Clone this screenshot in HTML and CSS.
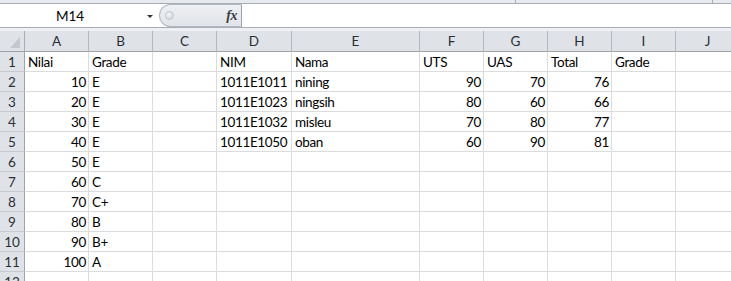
FILE: index.html
```html
<!DOCTYPE html>
<html>
<head>
<meta charset="utf-8">
<link rel="stylesheet" href="styles.css">
</head>
<body>
<div class="app">
  <div class="ribbon-edge">
    <div class="rseg rseg1"></div>
    <div class="rseg rseg2"></div>
    <div class="rseg rseg3"></div>
  </div>
  <div class="formula-bar">
    <div class="name-box">M14</div>
    <div class="nb-arrow"><span class="tri"></span></div>
    <div class="pill">
      <span class="knob"></span>
      <span class="fx">fx</span>
    </div>
    <div class="formula-input"></div>
  </div>
  <div class="gap-strip"></div>
  <div class="sheet">
    <div class="corner"><span class="corner-tri"></span></div>
    <div class="ch">A</div><div class="ch">B</div><div class="ch">C</div><div class="ch">D</div><div class="ch">E</div><div class="ch">F</div><div class="ch">G</div><div class="ch">H</div><div class="ch">I</div><div class="ch">J</div>

    <div class="rh">1</div>
    <div class="c">Nilai</div><div class="c">Grade</div><div class="c"></div><div class="c">NIM</div><div class="c">Nama</div><div class="c">UTS</div><div class="c">UAS</div><div class="c">Total</div><div class="c">Grade</div><div class="c"></div>

    <div class="rh">2</div>
    <div class="c n">10</div><div class="c">E</div><div class="c"></div><div class="c">1011E1011</div><div class="c">nining</div><div class="c n">90</div><div class="c n">70</div><div class="c n">76</div><div class="c"></div><div class="c"></div>

    <div class="rh">3</div>
    <div class="c n">20</div><div class="c">E</div><div class="c"></div><div class="c">1011E1023</div><div class="c">ningsih</div><div class="c n">80</div><div class="c n">60</div><div class="c n">66</div><div class="c"></div><div class="c"></div>

    <div class="rh">4</div>
    <div class="c n">30</div><div class="c">E</div><div class="c"></div><div class="c">1011E1032</div><div class="c">misleu</div><div class="c n">70</div><div class="c n">80</div><div class="c n">77</div><div class="c"></div><div class="c"></div>

    <div class="rh">5</div>
    <div class="c n">40</div><div class="c">E</div><div class="c"></div><div class="c">1011E1050</div><div class="c">oban</div><div class="c n">60</div><div class="c n">90</div><div class="c n">81</div><div class="c"></div><div class="c"></div>

    <div class="rh">6</div>
    <div class="c n">50</div><div class="c">E</div><div class="c"></div><div class="c"></div><div class="c"></div><div class="c"></div><div class="c"></div><div class="c"></div><div class="c"></div><div class="c"></div>

    <div class="rh">7</div>
    <div class="c n">60</div><div class="c">C</div><div class="c"></div><div class="c"></div><div class="c"></div><div class="c"></div><div class="c"></div><div class="c"></div><div class="c"></div><div class="c"></div>

    <div class="rh">8</div>
    <div class="c n">70</div><div class="c">C+</div><div class="c"></div><div class="c"></div><div class="c"></div><div class="c"></div><div class="c"></div><div class="c"></div><div class="c"></div><div class="c"></div>

    <div class="rh">9</div>
    <div class="c n">80</div><div class="c">B</div><div class="c"></div><div class="c"></div><div class="c"></div><div class="c"></div><div class="c"></div><div class="c"></div><div class="c"></div><div class="c"></div>

    <div class="rh">10</div>
    <div class="c n">90</div><div class="c">B+</div><div class="c"></div><div class="c"></div><div class="c"></div><div class="c"></div><div class="c"></div><div class="c"></div><div class="c"></div><div class="c"></div>

    <div class="rh">11</div>
    <div class="c n">100</div><div class="c">A</div><div class="c"></div><div class="c"></div><div class="c"></div><div class="c"></div><div class="c"></div><div class="c"></div><div class="c"></div><div class="c"></div>

    <div class="rh">12</div>
    <div class="c"></div><div class="c"></div><div class="c"></div><div class="c"></div><div class="c"></div><div class="c"></div><div class="c"></div><div class="c"></div><div class="c"></div><div class="c"></div>
  </div>
</div>
</body>
</html>
```

FILE: styles.css
```css
html, body {
  margin: 0;
  padding: 0;
  background: #ffffff;
}
body {
  width: 731px;
  height: 281px;
  overflow: hidden;
  font-family: Lato, "Liberation Sans", sans-serif;
  font-size: 13px;
  color: #000;
}
.app {
  width: 731px;
  height: 281px;
  overflow: hidden;
}
.ribbon-edge {
  display: flex;
  height: 3px;
  background: #e6e9ed;
  border-bottom: 1px solid #a7adb5;
}
.rseg {
  height: 3px;
  border-right: 1px solid #a7adb5;
  box-sizing: border-box;
}
.rseg1 { width: 516px; }
.rseg2 { width: 197px; }
.rseg3 { flex: 1; border-right: none; }

.formula-bar {
  display: flex;
  height: 23px;
  background: #fff;
  border-bottom: 1px solid #a7adb5;
}
.name-box {
  width: 140px;
  display: flex;
  align-items: center;
  justify-content: center;
  font-size: 13.5px;
  color: #000;
  padding-top: 1px;
  box-sizing: border-box;
}
.nb-arrow {
  width: 19px;
  display: flex;
  align-items: center;
  padding-left: 7px;
  box-sizing: border-box;
}
.tri {
  width: 0;
  height: 0;
  border-left: 3px solid transparent;
  border-right: 3px solid transparent;
  border-top: 3px solid #333;
  margin-top: 2px;
}
.pill {
  width: 83px;
  box-sizing: border-box;
  display: flex;
  align-items: center;
  justify-content: space-between;
  background: linear-gradient(#eef0f3, #e1e4e8);
  border: 1px solid #b3b9c1;
  border-right: 1px solid #9da4ad;
  border-radius: 12px 0 0 12px;
  padding: 0 4px 0 5px;
}
.knob {
  width: 9px;
  height: 9px;
  border-radius: 50%;
  background: radial-gradient(circle at 40% 35%, #f4f5f7, #c9cdd3);
  border: 1px solid #c3c7cd;
  box-sizing: border-box;
}
.fx {
  font-family: "Liberation Serif", serif;
  font-style: italic;
  font-weight: bold;
  font-size: 14px;
  color: #3a3f46;
  letter-spacing: -0.5px;
}
.formula-input {
  flex: 1;
  background: #fff;
}
.gap-strip {
  height: 3px;
  background: #eef0f3;
}

.sheet {
  display: grid;
  grid-template-columns: 25px 64px 64px 64px 75px 128px 64px 64px 64px 64px 64px;
  grid-template-rows: 21px;
  grid-auto-rows: 20px;
  width: 740px;
}
.sheet > div {
  box-sizing: border-box;
  white-space: nowrap;
  overflow: hidden;
}
.corner {
  position: relative;
  background: #dfe3e8;
  border-right: 1px solid #a9aeb5;
  border-bottom: 1px solid #9ea3aa;
}
.corner-tri {
  position: absolute;
  left: 10px;
  top: 6px;
  width: 10px;
  height: 11px;
  background: #c4c8ce;
  clip-path: polygon(100% 0, 100% 100%, 0 100%);
}
.ch {
  background: #dfe3e8;
  border-right: 1px solid #b3b8be;
  border-bottom: 1px solid #9ea3aa;
  text-align: center;
  line-height: 20px;
  color: #2b2f36;
  font-size: 13.5px;
}
.rh {
  background: #dfe3e8;
  border-right: 1px solid #9ea3aa;
  border-bottom: 1px solid #c6cace;
  text-align: center;
  color: #2b2f36;
  line-height: 18px;
  padding-top: 1px;
  font-size: 13.5px;
}
.c {
  border-right: 1px solid #dadcdd;
  border-bottom: 1px solid #dadcdd;
  padding: 1px 2px 0 3px;
  line-height: 18px;
  font-size: 13.5px;
  letter-spacing: -0.35px;
}
.c.n {
  text-align: right;
  padding-left: 2px;
  padding-right: 2px;
}
```
